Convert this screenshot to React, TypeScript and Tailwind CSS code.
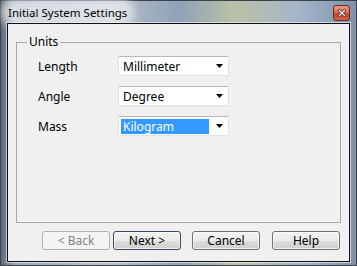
import React from 'react';

const font = { fontFamily: '"Noto Sans", "Open Sans", sans-serif' };

const Arrow = () => (
  <svg width="7" height="4" viewBox="0 0 7 4" className="ml-auto mr-[5px] shrink-0">
    <polygon points="0,0 7,0 3.5,4" fill="#000" />
  </svg>
);

const Combo = ({ value, selected }: { value: string; selected?: boolean }) => (
  <div className="flex h-[20px] w-[111px] items-center rounded-[2px] border border-[#dfe3e8] border-t-[#b5b9c0] bg-white">
    <span
      className={
        selected
          ? 'ml-[2px] h-[15px] w-[88px] bg-[#3399ff] pl-[2px] text-[12px] leading-[15px] text-white'
          : 'ml-[2px] h-[15px] w-[88px] pl-[2px] text-[12px] leading-[15px] text-black'
      }
    >
      {value}
    </span>
    <Arrow />
  </div>
);

const Row = ({ label, value, selected }: { label: string; value: string; selected?: boolean }) => (
  <div className="flex h-[20px] items-center pl-[21px]">
    <span className="w-[80px] text-[12px] leading-[15px] text-black">{label}</span>
    <Combo value={value} selected={selected} />
  </div>
);

const Button = ({ children, disabled, isDefault }: { children: React.ReactNode; disabled?: boolean; isDefault?: boolean }) => {
  if (disabled) {
    return (
      <div className="flex h-[19px] w-[68px] items-center justify-center rounded-[3px] border border-[#adb2b5] bg-[#f4f4f4] text-[12px] leading-[15px] text-[#838383]">
        {children}
      </div>
    );
  }
  return (
    <div
      className={
        'flex h-[19px] w-[68px] items-center justify-center rounded-[3px] border bg-[linear-gradient(180deg,#f2f2f2_0%,#ebebeb_50%,#dddddd_51%,#cfcfcf_100%)] text-[12px] leading-[15px] text-black shadow-[inset_0_0_0_1px_rgba(255,255,255,0.7)] ' +
        (isDefault ? 'border-[#3a4a5a]' : 'border-[#707070]')
      }
    >
      {children}
    </div>
  );
};

const CloseIcon = () => (
  <svg width="8" height="8" viewBox="0 0 8 8" className="block">
    <path d="M1.5 1.5 L6.5 6.5 M6.5 1.5 L1.5 6.5" stroke="#4a1c14" strokeWidth="2.6" strokeLinecap="square" />
    <path d="M1.5 1.5 L6.5 6.5 M6.5 1.5 L1.5 6.5" stroke="#ffffff" strokeWidth="1.3" strokeLinecap="square" />
  </svg>
);

const App: React.FC = () => {
  return (
    <div
      style={font}
      className="flex h-[266px] w-[357px] flex-col border border-[#3d434b] bg-[linear-gradient(90deg,#5f6a78_0%,#9aa8b8_4%,#b9c2cc_30%,#8fa2b8_50%,#b9c2a6_66%,#a4b5ca_84%,#7f92ab_100%)]"
    >
      {/* title bar */}
      <div className="flex h-[22px] items-start justify-between pl-[6px] pr-[6px]">
        <div className="mt-[3px] rounded-[8px] bg-[rgba(235,238,240,0.75)] px-[1px] text-[11.5px] leading-[17px] text-black shadow-[0_0_8px_6px_rgba(235,238,240,0.75)]">
          Initial System Settings
        </div>
        <div className="mt-[4px] flex h-[16px] w-[17px] shrink-0 items-center justify-center rounded-[3px] border border-[#6a2c20] bg-[linear-gradient(180deg,#eb9a85_0%,#d8684c_50%,#c4462a_55%,#d06248_100%)]">
          <CloseIcon />
        </div>
      </div>

      {/* client area */}
      <div className="mx-[6px] mb-[3px] flex flex-1 flex-col border border-[#101010] bg-[#f0f0f0] shadow-[0_0_0_1px_rgba(255,255,255,0.55)]">
        <fieldset className="ml-[8px] mt-[10px] h-[189px] w-[325px] border border-[#a8a8a8]">
          <legend className="ml-[10px] px-[2px] text-[12px] leading-[16px] text-black">Units</legend>
          <div className="mt-[6px] flex flex-col gap-[10px]">
            <Row label="Length" value="Millimeter" />
            <Row label="Angle" value="Degree" />
            <Row label="Mass" value="Kilogram" selected />
          </div>
        </fieldset>

        <div className="ml-[34px] mt-[8px] flex">
          <Button disabled>&lt; Back</Button>
          <div className="ml-[3px]">
            <Button isDefault>Next &gt;</Button>
          </div>
          <div className="ml-[11px]">
            <Button>Cancel</Button>
          </div>
          <div className="ml-[12px]">
            <Button>Help</Button>
          </div>
        </div>
      </div>
    </div>
  );
};

export default App;
